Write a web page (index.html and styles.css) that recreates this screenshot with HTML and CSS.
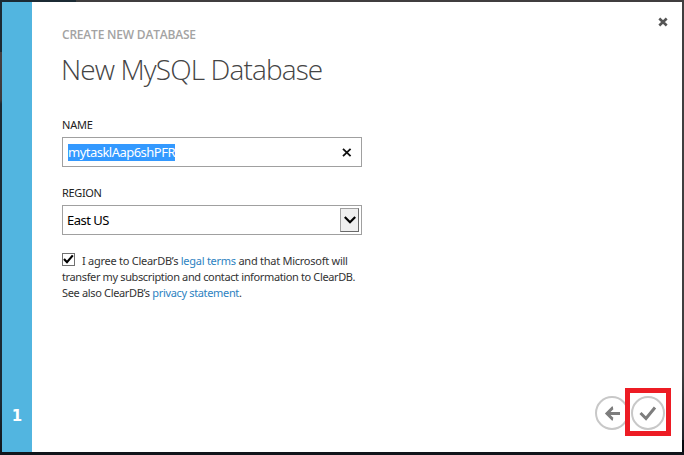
FILE: index.html
```html
<!DOCTYPE html>
<html lang="en">
<head>
<meta charset="utf-8">
<title>New MySQL Database</title>
<link rel="stylesheet" href="styles.css">
</head>
<body>
<div class="dialog">
  <aside class="steps"><span class="step">1</span></aside>
  <main class="panel">
    <button class="close" aria-label="Close">
      <svg width="10" height="10" viewBox="0 0 10 10"><path d="M1.3 1.5 8.7 8.5M8.7 1.5 1.3 8.5"/></svg>
    </button>
    <div class="content">
      <div class="eyebrow"><span>CREATE NEW DATABASE</span></div>
      <h1 class="title"><span>New MySQL Database</span></h1>
      <div class="label name-label"><span>NAME</span></div>
      <div class="field text-field">
        <span class="selected">mytasklAap6shPFR</span>
        <svg class="clear" width="10" height="9" viewBox="0 0 10 9"><path d="M1 .8 8.6 8.2M8.6 .8 1 8.2"/></svg>
      </div>
      <div class="label region-label"><span>REGION</span></div>
      <div class="field select-field">
        <span class="value">East US</span>
        <span class="drop"><svg width="12" height="8" viewBox="0 0 12 8"><path d="M.8 1 6 6.2 11.2 1"/></svg></span>
      </div>
      <div class="terms">
        <div class="line"><span class="check"><svg width="11" height="11" viewBox="0 0 11 11"><path d="M1 5 4 8.2 9.8 1.4"/></svg></span><span class="t1">I agree to ClearDB’s <a>legal terms</a> and that Microsoft will</span></div>
        <div class="line"><span class="t2">transfer my subscription and contact information to ClearDB.</span></div>
        <div class="line"><span class="t3">See also ClearDB’s <a>privacy statement</a>.</span></div>
      </div>
    </div>
    <div class="actions">
      <svg class="circle" width="34" height="34" viewBox="0 0 34 34"><circle cx="17" cy="17" r="16"/><path d="M25 17.5H12M18 12H17.5L12 17.5 17.5 23H18"/></svg>
      <div class="highlight">
        <svg class="circle" width="34" height="34" viewBox="0 0 34 34"><circle cx="17" cy="17" r="16"/><path d="M9.5 17 15 22.5 24 11.5"/></svg>
      </div>
    </div>
  </main>
</div>
</body>
</html>
```
FILE: styles.css
```css
* { box-sizing: border-box; }
body {
  margin: 0;
  width: 684px;
  height: 455px;
  padding: 2px 2px 3px;
  overflow: hidden;
  background: linear-gradient(to right, #1b2a34 76px, #403e3f 76px) 0 0 / 100% 2px no-repeat,
    linear-gradient(#11151b, #11151b) 0 100% / 100% 3px no-repeat,
    linear-gradient(#1b2a34 52px, #453f40 52px, #3c393b 100px, #1b2a34 104px, #1b2a34 400px, #11151b) 0 0 / 2px 100% no-repeat,
    linear-gradient(#403e3f 370px, #22232a 440px, #05070d 440px);
  font-family: "Noto Sans", "Open Sans", sans-serif;
}
.dialog { display: flex; height: 450px; background: #fff; }
.steps {
  width: 30px;
  display: flex;
  align-items: flex-end;
  justify-content: center;
  padding-bottom: 26px;
  background: #52b5e0;
}
.step { color: #fff; font: bold 15px/20px "DejaVu Sans", sans-serif; }
.panel {
  flex: 1;
  position: relative;
  display: flex;
  flex-direction: column;
  justify-content: space-between;
  padding: 24px 11px 16px 30px;
}
.close {
  position: absolute;
  top: 15px;
  right: 14px;
  width: 10px;
  height: 10px;
  padding: 0;
  border: 0;
  background: none;
  display: flex;
}
.close path { fill: none; stroke: #555; stroke-width: 2.6; }
.content { width: 300px; white-space: nowrap; }
.eyebrow { font: 600 12px/17px "Open Sans", sans-serif; color: #a3a3a3; letter-spacing: -0.2px; }
.title {
  margin: 4px 0 0 -1px;
  font: 300 28px/44px "Open Sans", sans-serif;
  color: #444;
  letter-spacing: -0.88px;
}
.label { font-size: 11px; line-height: 16px; color: #222; }
.name-label { margin-top: 26px; letter-spacing: -0.2px; }
.region-label { margin-top: 18px; letter-spacing: -0.35px; }
.field {
  display: flex;
  align-items: center;
  justify-content: space-between;
  height: 30px;
  margin-top: 4px;
  border: 1px solid #a0a0a0;
  color: #000;
}
.text-field { padding: 0 9px 0 5px; }
.selected { background: #3399ff; color: #fff; font-size: 13px; line-height: 17px; letter-spacing: -0.52px; }
.clear path { fill: none; stroke: #111; stroke-width: 1.8; }
.select-field { padding: 0 2px 0 4px; }
.value { font-size: 13px; line-height: 18px; letter-spacing: -0.52px; }
.drop {
  display: flex;
  align-items: center;
  justify-content: center;
  width: 19px;
  height: 24px;
  background: #efefef;
  border: 1px solid #a0a0a0;
  border-right-color: #696969;
  border-bottom-color: #696969;
}
.drop path { fill: none; stroke: #000; stroke-width: 2.2; }
.terms { margin-top: 18px; font-size: 11px; line-height: 16px; color: #333; }
.line { display: flex; height: 16px; }
.check {
  width: 13px;
  height: 13px;
  margin-right: 7px;
  border: 1px solid #707070;
  background: #fff;
  display: flex;
}
.check path { fill: none; stroke: #000; stroke-width: 2.2; }
.terms a { color: #2d82c1; }
.t1 { letter-spacing: -0.26px; }
.t2 { letter-spacing: -0.37px; }
.t3 { letter-spacing: -0.34px; }
.actions { display: flex; align-items: center; justify-content: flex-end; }
.circle { display: block; flex: none; margin-top: 2px; }
.circle circle { fill: #fff; stroke: #c8c8c8; stroke-width: 2; }
.circle path { fill: none; stroke: #7d7d7d; stroke-width: 3; }
.highlight {
  position: relative;
  width: 46px;
  height: 48px;
  margin-left: -4px;
  border: 5px solid #ed1c24;
  display: flex;
  align-items: center;
  justify-content: center;
}
```
